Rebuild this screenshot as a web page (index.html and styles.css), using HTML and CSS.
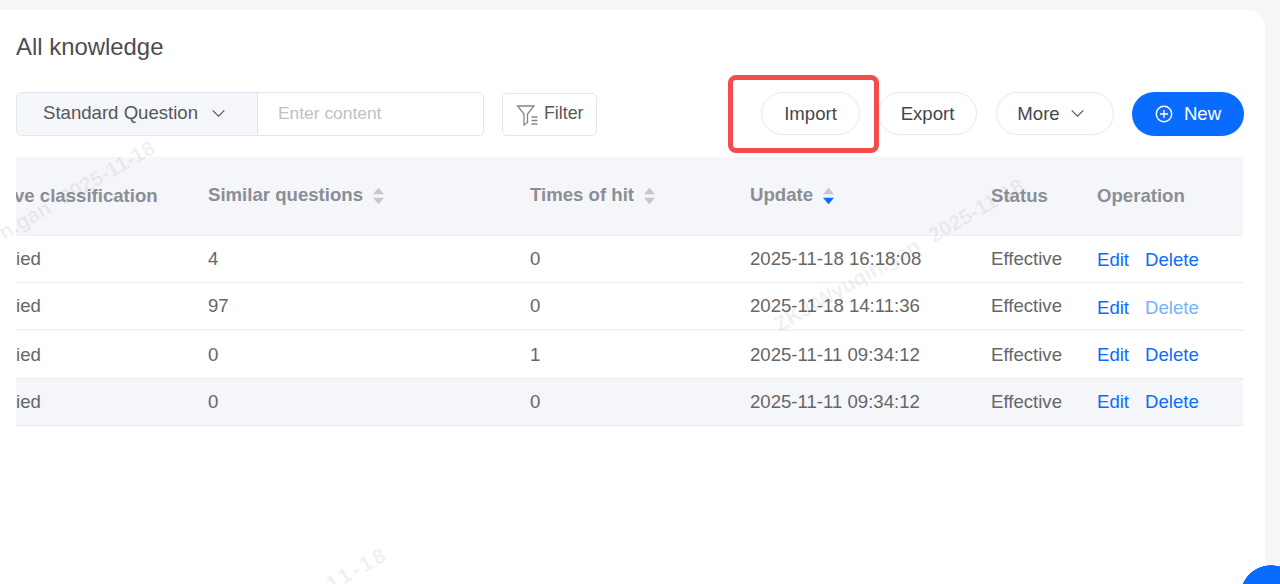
FILE: index.html
```html
<!DOCTYPE html>
<html lang="en">
<head>
<meta charset="utf-8">
<title>All knowledge</title>
<link rel="stylesheet" href="styles.css">
</head>
<body>
<main class="card">
  <h1 class="title">All knowledge</h1>
  <div class="toolbar">
    <div class="search">
      <div class="search-type">Standard Question
        <svg class="chev" viewBox="0 0 16 10"><path d="M1.500 1.500 8 8l6.500-6.500"/></svg>
      </div>
      <div class="search-input">Enter content</div>
    </div>
    <button class="filter">
      <svg class="filter-icon" viewBox="0 0 24 24"><path d="M1.500 3h16.500l-6.500 8v8.500l-3.500 2.500V11z"/><path d="M15.500 14h6M15.500 17.500h6M15.500 21h6"/></svg>
      Filter
    </button>
    <div class="actions">
      <button class="pill import">Import</button>
      <button class="pill export">Export</button>
      <button class="pill more">More
        <svg class="chev" viewBox="0 0 16 10"><path d="M1.500 1.500 8 8l6.500-6.500"/></svg>
      </button>
      <button class="pill new">
        <svg class="plus" viewBox="0 0 18 18"><circle cx="9" cy="9" r="7.700"/><path d="M9 5v8M5 9h8"/></svg>
        New
      </button>
    </div>
  </div>
  <div class="table">
    <div class="row head">
      <div class="clipped">ve classification</div>
      <div class="sortable">Similar questions <svg class="sort" viewBox="0 0 12 18"><path class="up" d="M6 0l6 7H0z"/><path class="down" d="M0 11h12l-6 7z"/></svg></div>
      <div class="sortable">Times of hit <svg class="sort" viewBox="0 0 12 18"><path class="up" d="M6 0l6 7H0z"/><path class="down" d="M0 11h12l-6 7z"/></svg></div>
      <div class="sortable">Update <svg class="sort active" viewBox="0 0 12 18"><path class="up" d="M6 0l6 7H0z"/><path class="down" d="M0 11h12l-6 7z"/></svg></div>
      <div>Status</div>
      <div>Operation</div>
    </div>
    <div class="row r1">
      <div>ied</div><div>4</div><div>0</div><div>2025-11-18 16:18:08</div><div>Effective</div>
      <div class="ops low"><a>Edit</a><a>Delete</a></div>
    </div>
    <div class="row r2">
      <div>ied</div><div>97</div><div>0</div><div>2025-11-18 14:11:36</div><div>Effective</div>
      <div class="ops lower"><a>Edit</a><a class="faded">Delete</a></div>
    </div>
    <div class="row r3">
      <div>ied</div><div>0</div><div>1</div><div>2025-11-11 09:34:12</div><div>Effective</div>
      <div class="ops"><a>Edit</a><a>Delete</a></div>
    </div>
    <div class="row r4">
      <div>ied</div><div>0</div><div>0</div><div>2025-11-11 09:34:12</div><div>Effective</div>
      <div class="ops"><a>Edit</a><a>Delete</a></div>
    </div>
  </div>
</main>
<div class="highlight"></div>
<div class="wm wm-a">n.gan 2025-11-18</div>
<div class="wm wm-b">ZKJ\Wyuqin.gan 2025-11-18</div>
<div class="wm wm-c">-11-18</div>
<div class="fab"></div>
</body>
</html>
```
FILE: styles.css
```css
* { box-sizing: border-box; }
html, body { margin: 0; height: 100%; }
body {
  position: relative;
  overflow: hidden;
  padding-top: 10px;
  background: #f6f6f7;
  font-family: "Liberation Sans", Arial, sans-serif;
  font-size: 18.600px;
  color: #666;
}
.card {
  width: 1265px;
  height: 574px;
  padding: 0 21px 0 16px;
  background: #fff;
  border-top-right-radius: 16px;
}
.title {
  margin: 0;
  padding-top: 23px;
  height: 82px;
  font-size: 23.900px;
  line-height: 28px;
  font-weight: 400;
  color: #4d4d4f;
}
.toolbar { display: flex; align-items: flex-end; height: 44px; }
.search {
  display: flex;
  width: 468px;
  height: 44px;
  border: 1px solid #e3e5ee;
  border-radius: 5px;
  overflow: hidden;
}
.search-type {
  display: flex;
  align-items: center;
  gap: 13px;
  width: 241px;
  padding: 0 0 2px 26px;
  background: #f5f6fa;
  border-right: 1px solid #e3e5ee;
  color: #55575c;
}
.search-input {
  display: flex;
  align-items: center;
  padding: 0 0 1px 20px;
  font-size: 17.400px;
  color: #bdc0c9;
}
.chev { width: 15px; height: 9px; fill: none; stroke: #55575c; stroke-width: 1.300; }
button { font: inherit; background: #fff; cursor: pointer; }
.filter {
  display: flex;
  align-items: center;
  gap: 4px;
  margin-left: 18px;
  width: 95px;
  height: 43px;
  padding: 0 0 2px 13px;
  border: 1px solid #e3e5ee;
  border-radius: 5px;
  font-size: 17.800px;
  color: #55575c;
}
.filter-icon { width: 24px; height: 24px; margin-top: 2px; fill: none; stroke: #85878d; stroke-width: 1.300; }
.actions { display: flex; margin-left: auto; }
.pill {
  display: flex;
  align-items: center;
  justify-content: center;
  height: 43px;
  padding: 0;
  border: 1px solid #e9e9ec;
  border-radius: 22px;
  color: #45474c;
  font-size: 18.600px;
}
.import { width: 99px; margin-right: 18px; }
.export { width: 99px; margin-right: 19px; }
.more { width: 118px; margin-right: 18px; gap: 10px; padding-right: 8px; }
.new {
  width: 112px;
  height: 44px;
  gap: 11px;
  border: 0;
  background: #0a6cff;
  color: #fff;
}
.plus { width: 18px; height: 18px; fill: none; stroke: #fff; stroke-width: 1.400; }
.table { width: 1227px; margin-top: 21px; }
.row {
  display: grid;
  grid-template-columns: 192px 322px 220px 241px 106px 146px;
  align-items: center;
  white-space: nowrap;
  overflow: hidden;
}
.head { height: 79px; background: #f5f6fa; font-weight: 700; color: #8c8e95; border-bottom: 1px solid #eef0f5; }
.head .clipped { margin-left: -2px; }
.head .sortable { display: flex; align-items: center; gap: 10px; margin-top: -3px; }
.sort { width: 11px; height: 18px; margin-top: 3px; }
.sort .up, .sort .down { fill: #c6c8ce; }
.sort.active .down { fill: #0a6cff; }
.r1 { height: 47px; border-bottom: 1px solid #e8ecf5; }
.r2 { height: 48px; border-bottom: 2px solid #f1f2f6; }
.r3 { height: 48px; padding-top: 1px; border-bottom: 1px solid #e9ebf2; }
.r4 { height: 47px; background: #f5f6fa; border-bottom: 1px solid #e9ebf2; }
.ops { display: flex; gap: 16px; color: #0a6cff; }
.ops.low { margin-top: 2px; }
.ops.lower { margin-top: 4px; }
.faded { color: #73b4ff; }
.highlight {
  position: absolute;
  left: 728px;
  top: 75px;
  width: 151px;
  height: 78px;
  border: 5px solid #f44c4c;
  border-radius: 8px;
}
.wm {
  position: absolute;
  font-size: 21px;
  font-weight: 700;
  word-spacing: 8px;
  color: rgba(90, 90, 90, .09);
  white-space: nowrap;
  transform: rotate(-30deg);
  transform-origin: right center;
  pointer-events: none;
}
.wm-a { right: 1127px; top: 134px; }
.wm-b { right: 258px; top: 172px; }
.wm-c { right: 893px; top: 540px; letter-spacing: 3px; }
.fab {
  position: absolute;
  left: 1240px;
  top: 565px;
  width: 40px;
  height: 19px;
  background: radial-gradient(circle at 31px 31px, #0a6cff 30.500px, transparent 31px);
}
```
